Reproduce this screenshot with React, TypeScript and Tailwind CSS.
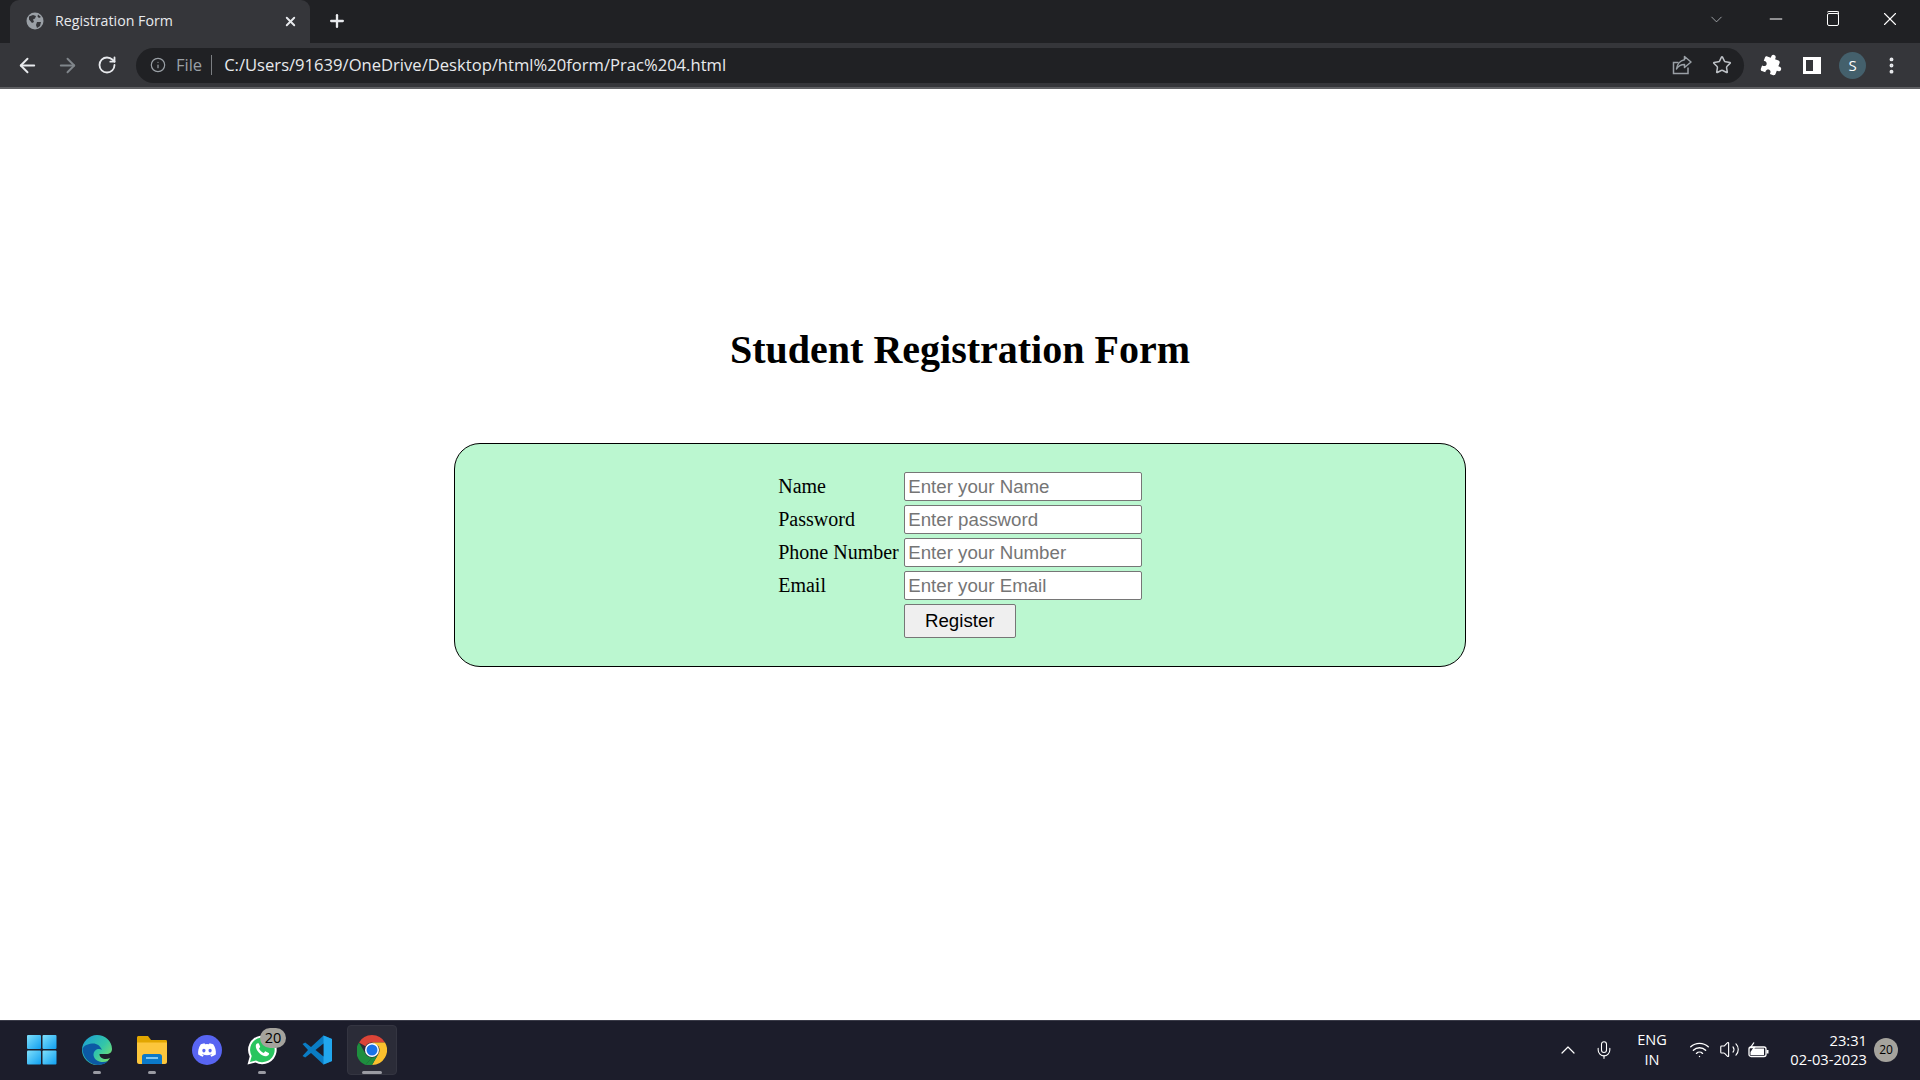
import { ArrowLeft, ArrowRight, ChevronDown, ChevronUp, Info, Mic, Minus, MoreVertical, Plus, RotateCw, Star, Volume2, Wifi, X } from 'lucide-react';
import { MdExtension } from 'react-icons/md';

const rows = [
  { label: 'Name', placeholder: 'Enter your Name' },
  { label: 'Password', placeholder: 'Enter password' },
  { label: 'Phone Number', placeholder: 'Enter your Number' },
  { label: 'Email', placeholder: 'Enter your Email' },
];

function Globe() {
  return (
    <svg width="18" height="18" viewBox="0 0 18 18" className="shrink-0">
      <circle cx="9" cy="9" r="8.5" fill="#9aa0a6" />
      <path d="M3 4.5 L7 3 L10 4 L9 6.5 L7 7.5 L8 10 L6 11 L3 7.5 Z M11 10 L15 10 L14 14 L11 16 L10 13 Z M12 2.5 L15 5 L13 6 L11.5 4.5 Z" fill="#35363a" />
    </svg>
  );
}

function ShareIcon() {
  return (
    <svg width="20" height="20" viewBox="0 0 20 20" fill="none" stroke="#9aa0a6" strokeWidth="1.5">
      <path d="M16 12.5V18.5H1.5V7.5H6.5" />
      <path d="M12.5 1.5L19 7L12.5 12.5V9.5C9 9.5 6.5 10.5 4.5 14C5 9.5 8 5.5 12.5 4.8Z" strokeLinejoin="round" />
    </svg>
  );
}

function StartLogo() {
  return (
    <svg width="30" height="30" viewBox="0 0 30 30">
      <defs>
        <linearGradient id="winA" x1="0" y1="0" x2="1" y2="1">
          <stop offset="0" stopColor="#7fe0fb" />
          <stop offset="1" stopColor="#0f9ff0" />
        </linearGradient>
      </defs>
      <rect x="0" y="0" width="14" height="14" rx="1" fill="url(#winA)" />
      <rect x="15.5" y="0" width="14" height="14" rx="1" fill="url(#winA)" />
      <rect x="0" y="15.5" width="14" height="14" rx="1" fill="url(#winA)" />
      <rect x="15.5" y="15.5" width="14" height="14" rx="1" fill="url(#winA)" />
    </svg>
  );
}

function EdgeLogo() {
  return (
    <svg width="30" height="30" viewBox="0 0 30 30">
      <defs>
        <linearGradient id="edgeTop" x1="0" y1="0" x2="1" y2="0.8">
          <stop offset="0" stopColor="#1a9bd8" />
          <stop offset="0.6" stopColor="#33c6a8" />
          <stop offset="1" stopColor="#7fe06a" />
        </linearGradient>
      </defs>
      <path d="M15 0C23 0 30 6 30 14C30 17 28 19 24 19H17.500C17.500 24 24 25 28 23C25 28 20 30 15 30C7 30 0 23 0 15C0 7 7 0 15 0Z" fill="url(#edgeTop)" />
      <path d="M0.5 14C1 24 9 30 16 30C20 30 24 28.500 26 26C21 28 14 27 12 22C10.500 18 13 14.500 16 14C19 13.500 20 15 20 15C18 10 14 8 10 8.500C5 9 1.500 11 0.500 14Z" fill="#0c59a4" />
    </svg>
  );
}

function FolderLogo() {
  return (
    <svg width="30" height="30" viewBox="0 0 30 30">
      <path d="M0 2.500C0 1.500 .8 1 1.500 1H11L14 5H28.500C29.500 5 30 5.500 30 6.500V9H0Z" fill="#e2a600" />
      <path d="M0 7.500H30V27C30 28 29 29 28 29H2C1 29 0 28 0 27Z" fill="#fcc63c" />
      <path d="M5 29V21.500C5 20 6 19 7.500 19H22.500C24 19 25 20 25 21.500V29Z" fill="#0b79c9" />
      <rect x="9" y="22" width="12" height="2" fill="#7fc8f2" />
    </svg>
  );
}

function DiscordLogo() {
  return (
    <svg width="30" height="30" viewBox="0 0 30 30">
      <circle cx="15" cy="15" r="15" fill="#5865f2" />
      <path d="M21.200 9.300A15 15 0 0 0 17.500 8.200L17 9.200A14 14 0 0 0 13 9.200L12.500 8.200A15 15 0 0 0 8.800 9.300C6.500 12.800 5.800 16.200 6.200 19.500A15 15 0 0 0 10.700 21.800L11.700 20.300A9 9 0 0 1 10.100 19.500L10.500 19.200A11 11 0 0 0 19.500 19.200L19.900 19.500A9 9 0 0 1 18.300 20.300L19.300 21.800A15 15 0 0 0 23.800 19.500C24.300 15.700 23.200 12.300 21.200 9.300ZM11.900 17.500C11 17.500 10.300 16.700 10.300 15.600C10.300 14.600 11 13.800 11.900 13.800C12.800 13.800 13.600 14.600 13.500 15.600C13.500 16.700 12.800 17.500 11.900 17.500ZM18.100 17.500C17.200 17.500 16.500 16.700 16.500 15.600C16.500 14.600 17.200 13.800 18.100 13.800C19 13.800 19.700 14.600 19.700 15.600C19.700 16.700 19 17.500 18.100 17.500Z" fill="#fff" />
    </svg>
  );
}

function WhatsAppLogo() {
  return (
    <svg width="30" height="30" viewBox="0 0 30 30">
      <path d="M0.500 29.500L2.700 21.500A14.300 14.300 0 1 1 8.500 27.400Z" fill="#fff" />
      <path d="M3 27L4.700 21A12.300 12.300 0 1 1 9 25.400Z" fill="#29c55f" />
      <path d="M10.700 8.200C10.200 8.200 9 9 8.800 10.600C8.500 13 10 15.700 12 17.800C14.200 20 17 21.500 19.300 21.200C21 21 22 19.700 22 19C22.100 18.400 22 18 21.700 17.900L18.700 16.400C18.300 16.300 18 16.400 17.800 16.700L16.800 18C14.800 17.200 13 15.400 12 13.400L13 12.300C13.200 12 13.200 11.700 13.100 11.400L11.800 8.600C11.600 8.300 11.200 8.200 10.700 8.200Z" fill="#fff" />
    </svg>
  );
}

function VsCodeLogo() {
  return (
    <svg width="30" height="30" viewBox="0 0 30 30">
      <path d="M21.500 0.500L9 12L3.200 7.500L0.500 9L6 15L0.500 21L3.200 22.500L9 18L21.500 29.500L30 26V4Z" fill="#0a7cc4" />
      <path d="M21.500 0.500L30 4V26L21.500 29.500V21L21.500 21.500V8.500Z" fill="#21a6ee" />
      <path d="M21.500 8.500L13.500 15L21.500 21.500Z" fill="#1c1d2b" />
    </svg>
  );
}

function ChromeLogo() {
  return (
    <svg width="30" height="30" viewBox="0 0 30 30">
      <path d="M15 0A15 15 0 0 1 28 7.500H15A7.500 7.500 0 0 0 8.500 11.250L2 7.500A15 15 0 0 1 15 0Z" fill="#db4437" />
      <path d="M2 7.500L8.500 18.750A7.500 7.500 0 0 0 15 22.500L8.500 30A15 15 0 0 1 2 7.500Z" fill="#1e8e3e" />
      <path d="M28 7.500A15 15 0 0 1 15 30L21.500 18.750A7.500 7.500 0 0 0 21.500 11.250L15 7.500Z" fill="#fbc02d" />
      <path d="M8.500 30L15 22.500A7.500 7.500 0 0 0 21.500 18.750L15 30Z" fill="#1e8e3e" />
      <circle cx="15" cy="15" r="7" fill="#fff" />
      <circle cx="15" cy="15" r="5.500" fill="#1a73e8" />
    </svg>
  );
}

function BatteryIcon() {
  return (
    <svg width="22" height="16" viewBox="0 0 22 16" fill="none" stroke="#fff" strokeWidth="1.300">
      <rect x="1" y="5" width="17" height="9.500" rx="2" />
      <path d="M5 6.500H16V13H2.500V10Z" fill="#fff" stroke="none" />
      <path d="M19.500 8V11.500" strokeWidth="2" />
      <path d="M6 0.500L2.500 5.500H6.500L4 9.500" strokeWidth="1.300" />
    </svg>
  );
}

function BrowserChrome() {
  return (
    <header className="shrink-0 font-['Open_Sans',sans-serif]">
      <div className="flex h-[43px] items-end bg-[#202124] pl-[10px] text-white">
        <div className="flex h-[43px] w-[300px] items-center rounded-t-[9px] bg-[#35363a] pb-[1px] pl-[16px] pr-[12px]">
          <Globe />
          <span className="ml-[11px] flex-1 text-[14.200px] text-[#e8eaed]">Registration Form</span>
          <X size={15} strokeWidth={3} className="text-[#e8eaed]" />
        </div>
        <Plus size={20} strokeWidth={2.800} className="mb-[12px] ml-[17px] text-[#e8eaed]" />
        <div className="ml-auto flex h-full items-center pb-[5px] pr-[2px]">
          <ChevronDown size={19} strokeWidth={1} className="text-[#bdc1c6]" />
          <div className="ml-[21px] flex w-[57px] justify-center"><Minus size={20} strokeWidth={1.200} /></div>
          <div className="relative flex w-[57px] justify-center">
            <div className="h-[13px] w-[12px] rounded-[2px] border border-white" />
            <div className="absolute left-[23px] top-[-2px] h-[3px] w-[12px] rounded-t-[2px] border-r border-t border-white" />
          </div>
          <div className="flex w-[57px] justify-center"><X size={22} strokeWidth={1.200} /></div>
        </div>
      </div>
      <div className="flex h-[46px] items-center border-b-2 border-[#5f6063] bg-[#35363a] pl-[16px] text-[#e8eaed]">
        <ArrowLeft size={23} strokeWidth={2} />
        <ArrowRight size={23} strokeWidth={2} className="ml-[17px] text-[#80868b]" />
        <RotateCw size={20} strokeWidth={2.200} className="ml-[18px]" />
        <div className="ml-[19px] flex h-[35px] w-[1608px] items-center rounded-full bg-[#202124] pl-[14px] pr-[12px]">
          <Info size={16} strokeWidth={1.800} className="text-[#9aa0a6]" />
          <span className="ml-[10px] text-[16.500px] text-[#9aa0a6]">File</span>
          <div className="ml-[9px] h-[20px] w-px bg-[#7b7e82]" />
          <span className="ml-[12px] text-[16.600px] text-[#e8eaed]">C:/Users/91639/OneDrive/Desktop/html%20form/Prac%204.html</span>
          <div className="ml-auto flex items-center gap-[20px]">
            <ShareIcon />
            <Star size={20} strokeWidth={1.800} className="text-[#bdc1c6]" />
          </div>
        </div>
        <MdExtension size={22} className="ml-[17px] rotate-[20deg] text-white" />
        <div className="ml-[20px] h-[17px] w-[18px] border-[3px] border-r-[8px] border-white" />
        <div className="ml-[18px] flex size-[27px] items-center justify-center rounded-full bg-[#44606c] text-[15px] text-white">S</div>
        <MoreVertical size={21} strokeWidth={2.500} className="ml-[15px] text-[#e8eaed]" />
      </div>
    </header>
  );
}

function RegistrationForm() {
  return (
    <main className="flex min-h-0 flex-1 flex-col items-center bg-white pt-[238px] font-['Liberation_Serif',serif] text-black">
      <h1 className="text-[40px] font-bold leading-[46px]">Student Registration Form</h1>
      <div className="mt-[70px] flex w-[1012px] justify-center rounded-[26px] border border-black bg-[#bbf7d0] py-[28px]">
        <form className="grid grid-cols-[auto_238px] gap-x-[5px] gap-y-[4px] text-[20px] leading-[23px]">
          {rows.map((row) => (
            <div key={row.label} className="contents">
              <label className="flex items-center">{row.label}</label>
              <input
                placeholder={row.placeholder}
                className="h-[29px] rounded-[2px] border border-[#767676] bg-white pl-[3.500px] pr-[3px] font-['Liberation_Sans',sans-serif] text-[18.700px] placeholder:text-[#757575]"
              />
            </div>
          ))}
          <button
            type="button"
            className="col-start-2 h-[34px] w-[112px] rounded-[2px] border border-[#767676] bg-[#efefef] pb-[2px] font-['Liberation_Sans',sans-serif] text-[18.700px]"
          >
            Register
          </button>
        </form>
      </div>
    </main>
  );
}

function Taskbar() {
  const apps = [
    { key: 'start', logo: <StartLogo />, running: false },
    { key: 'edge', logo: <EdgeLogo />, running: true },
    { key: 'files', logo: <FolderLogo />, running: true },
    { key: 'discord', logo: <DiscordLogo />, running: false },
    { key: 'whatsapp', logo: <WhatsAppLogo />, running: true },
    { key: 'code', logo: <VsCodeLogo />, running: false },
  ];
  return (
    <footer className="flex h-[60px] shrink-0 items-center border-t border-[#3a3b48] bg-[#1c1d2b] pb-[2px] pl-[27px] font-['Open_Sans',sans-serif] text-white">
      <div className="flex gap-[25px]">
        {apps.map((app) => (
          <div key={app.key} className="relative size-[30px]">
            {app.logo}
            {app.running && <div className="absolute bottom-[-9px] left-[11px] h-[3px] w-[8px] rounded-full bg-[#9a9ba3]" />}
            {app.key === 'whatsapp' && (
              <div className="absolute left-[13px] top-[-7px] flex h-[20px] w-[26px] items-center justify-center rounded-full bg-[#a5a39d] text-[14.500px] text-black">20</div>
            )}
          </div>
        ))}
        <div className="relative size-[30px]">
          <div className="absolute left-[-10px] top-[-10px] h-[50px] w-[50px] rounded-[4px] border border-[#343541] bg-[#2b2c38]" />
          <div className="relative"><ChromeLogo /></div>
          <div className="absolute bottom-[-9px] left-[5px] h-[3px] w-[20px] rounded-full bg-[#9a9ba3]" />
        </div>
      </div>
      <div className="ml-auto flex items-center pr-[22px]">
        <ChevronUp size={24} strokeWidth={1.200} />
        <Mic size={20} strokeWidth={1.300} className="ml-[14px]" />
        <div className="ml-[22px] w-[32px] text-center text-[14.500px] leading-[20px]">ENG<br />IN</div>
        <Wifi size={21} strokeWidth={1.600} className="ml-[21px]" />
        <Volume2 size={21} strokeWidth={1.300} className="ml-[9px]" />
        <div className="ml-[8px]"><BatteryIcon /></div>
        <div className="ml-[18px] w-[79px] whitespace-nowrap text-right text-[14.700px] leading-[19px]">23:31<br />02-03-2023</div>
        <div className="ml-[7px] flex size-[24px] items-center justify-center rounded-full bg-[#a5a39d] text-[12px] text-black">20</div>
      </div>
    </footer>
  );
}

export default function App() {
  return (
    <div className="flex h-screen w-full flex-col overflow-hidden">
      <BrowserChrome />
      <RegistrationForm />
      <Taskbar />
    </div>
  );
}
